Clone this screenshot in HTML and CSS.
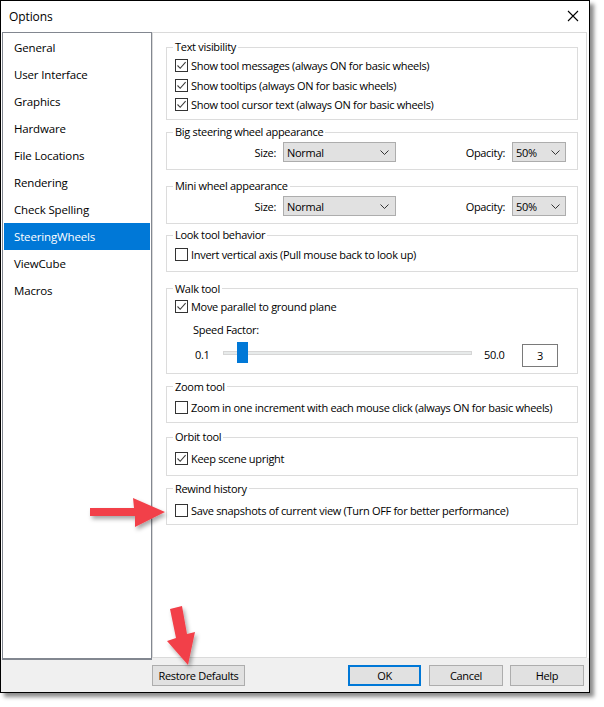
FILE: index.html
```html
<!DOCTYPE html>
<html>
<head>
<meta charset="utf-8">
<link rel="stylesheet" href="styles.css">
</head>
<body>
<div class="window">
  <div class="titlebar">
    <span class="title">Options</span>
    <svg class="close" width="12" height="12" viewBox="0 0 12 12"><path d="M1 1 L11 11 M11 1 L1 11" stroke="#000" stroke-width="1.1" fill="none"/></svg>
  </div>
  <div class="main">
    <ul class="list">
      <li>General</li>
      <li>User Interface</li>
      <li>Graphics</li>
      <li>Hardware</li>
      <li>File Locations</li>
      <li>Rendering</li>
      <li>Check Spelling</li>
      <li class="selected">SteeringWheels</li>
      <li>ViewCube</li>
      <li>Macros</li>
    </ul>
    <div class="panel">
      <fieldset class="group">
        <legend>Text visibility</legend>
        <div class="body b-tv">
          <div class="row"><span class="cb on"><svg viewBox="0 0 11 11"><path d="M1.5 5.5 L4.2 8.3 L9.6 2.2"/></svg></span><span>Show tool messages (always ON for basic wheels)</span></div>
          <div class="row"><span class="cb on"><svg viewBox="0 0 11 11"><path d="M1.5 5.5 L4.2 8.3 L9.6 2.2"/></svg></span><span>Show tooltips (always ON for basic wheels)</span></div>
          <div class="row"><span class="cb on"><svg viewBox="0 0 11 11"><path d="M1.5 5.5 L4.2 8.3 L9.6 2.2"/></svg></span><span>Show tool cursor text (always ON for basic wheels)</span></div>
        </div>
      </fieldset>
      <fieldset class="group mt4">
        <legend>Big steering wheel appearance</legend>
        <div class="body b-sel">
          <div class="selrow">
            <span class="lbl">Size:</span>
            <div class="select wide"><span class="val">Normal</span><svg width="9" height="5" viewBox="0 0 9 5"><path d="M0.5 0.5 L4.5 4.5 L8.5 0.5"/></svg></div>
            <span class="lbl">Opacity:</span>
            <div class="select narrow"><span class="val">50%</span><svg width="9" height="5" viewBox="0 0 9 5"><path d="M0.5 0.5 L4.5 4.5 L8.5 0.5"/></svg></div>
          </div>
        </div>
      </fieldset>
      <fieldset class="group mt8">
        <legend>Mini wheel appearance</legend>
        <div class="body b-sel">
          <div class="selrow">
            <span class="lbl">Size:</span>
            <div class="select wide"><span class="val">Normal</span><svg width="9" height="5" viewBox="0 0 9 5"><path d="M0.5 0.5 L4.5 4.5 L8.5 0.5"/></svg></div>
            <span class="lbl">Opacity:</span>
            <div class="select narrow"><span class="val">50%</span><svg width="9" height="5" viewBox="0 0 9 5"><path d="M0.5 0.5 L4.5 4.5 L8.5 0.5"/></svg></div>
          </div>
        </div>
      </fieldset>
      <fieldset class="group mt3">
        <legend>Look tool behavior</legend>
        <div class="body b-look">
          <div class="row"><span class="cb"></span><span>Invert vertical axis (Pull mouse back to look up)</span></div>
        </div>
      </fieldset>
      <fieldset class="group mt9">
        <legend>Walk tool</legend>
        <div class="body b-walk">
          <div class="row"><span class="cb on"><svg viewBox="0 0 11 11"><path d="M1.5 5.5 L4.2 8.3 L9.6 2.2"/></svg></span><span>Move parallel to ground plane</span></div>
          <div class="speed">Speed Factor:</div>
          <div class="sliderrow">
            <span class="min">0.1</span>
            <div class="slider"><div class="track"></div><div class="thumb"></div></div>
            <span class="max">50.0</span>
            <div class="textbox">3</div>
          </div>
        </div>
      </fieldset>
      <fieldset class="group mt5">
        <legend>Zoom tool</legend>
        <div class="body b-zoom">
          <div class="row"><span class="cb"></span><span>Zoom in one increment with each mouse click (always ON for basic wheels)</span></div>
        </div>
      </fieldset>
      <fieldset class="group mt6">
        <legend>Orbit tool</legend>
        <div class="body b-orbit">
          <div class="row"><span class="cb on"><svg viewBox="0 0 11 11"><path d="M1.5 5.5 L4.2 8.3 L9.6 2.2"/></svg></span><span>Keep scene upright</span></div>
        </div>
      </fieldset>
      <fieldset class="group mt5">
        <legend>Rewind history</legend>
        <div class="body b-rewind">
          <div class="row"><span class="cb"></span><span>Save snapshots of current view (Turn OFF for better performance)</span></div>
        </div>
      </fieldset>
    </div>
  </div>
  <div class="footer">
    <div class="btn restore">Restore Defaults</div>
    <div class="spacer"></div>
    <div class="btn ok">OK</div>
    <div class="btn cancel">Cancel</div>
    <div class="btn help">Help</div>
  </div>
</div>
<svg class="arrows" width="604" height="707" viewBox="0 0 604 707">
  <defs>
    <filter id="sh" x="-20%" y="-20%" width="150%" height="150%">
      <feDropShadow dx="2" dy="3" stdDeviation="2" flood-color="#000" flood-opacity="0.35"/>
    </filter>
  </defs>
  <polygon filter="url(#sh)" fill="#f2414a" points="90,508 134,508 133,498 165,512 135,527 135,516 90,516"/>
  <polygon filter="url(#sh)" fill="#f2414a" points="170,609 182,606 187,634 195,632 188,665 167,641 176,638"/>
</svg>
</body>
</html>
```
FILE: styles.css
```css
html, body {
  margin: 0;
  padding: 0;
  background: #ffffff;
}
body {
  font-family: "Open Sans", "Noto Sans", sans-serif;
  font-size: 11px;
  letter-spacing: -0.3px;
  color: #000;
  position: relative;
  width: 604px;
  height: 707px;
  overflow: hidden;
}
.window {
  width: 588px;
  height: 691px;
  border: 1px solid #000;
  background: #f0f0f0;
  box-shadow: 4px 4px 4px rgba(0,0,0,0.45);
  display: flex;
  flex-direction: column;
}
.titlebar {
  height: 31px;
  background: #fff;
  display: flex;
  align-items: center;
  justify-content: space-between;
  padding: 0 10px 1px 8px;
  box-sizing: border-box;
}
.title {
  font-size: 12px;
  letter-spacing: -0.1px;
}
.close {
  margin-top: -1px;
}
.main {
  height: 626px;
  display: flex;
  background: #fff;
}
.list {
  list-style: none;
  margin: 0 0 0 1px;
  padding: 1px;
  width: 146px;
  height: 623px;
  border: 1px solid #828790;
  border-bottom-width: 2px;
}
.list li {
  height: 27px;
  line-height: 27px;
  padding-left: 10px;
  font-size: 11.5px;
  letter-spacing: -0.15px;
}
.list li.selected {
  background: #0078d7;
  color: #fff;
}
.panel {
  margin-right: 2px;
  border: 1px solid #dadada;
  padding-top: 6px;
  display: flex;
  flex-direction: column;
  box-sizing: border-box;
  width: 435px;
  height: 626px;
}
.group {
  border: 1px solid #dcdcdc;
  margin: 0 0 0 13px;
  padding: 0;
  width: 412px;
  box-sizing: border-box;
  min-width: 0;
}
.group legend {
  padding: 0 2px;
  margin-left: 6px;
  line-height: 16px;
  height: 16px;
}
.mt3 { margin-top: 3px; }
.mt4 { margin-top: 4px; }
.mt5 { margin-top: 5px; }
.mt6 { margin-top: 6px; }
.mt8 { margin-top: 8px; }
.mt9 { margin-top: 9px; }
.body {
  padding-left: 8px;
}
.b-tv { padding-top: 1px; padding-bottom: 4.5px; }
.b-sel { padding-top: 2px; padding-bottom: 7px; }
.b-look { padding-top: 2px; padding-bottom: 6px; }
.b-walk { padding-top: 0; padding-bottom: 6px; }
.b-zoom { padding-top: 3px; padding-bottom: 5px; }
.b-orbit { padding-top: 4px; padding-bottom: 6px; }
.b-rewind { padding-top: 4px; padding-bottom: 4px; }
.row {
  height: 19.5px;
  display: flex;
  align-items: center;
}
.cb {
  width: 11px;
  height: 11px;
  border: 1px solid #333;
  background: #fff;
  margin-right: 3px;
  flex: none;
  display: flex;
}
.cb svg {
  width: 11px;
  height: 11px;
}
.cb svg path {
  fill: none;
  stroke: #3c3c3c;
  stroke-width: 1.1;
}
.selrow {
  display: flex;
  align-items: center;
  height: 20px;
  margin-left: -8px;
}
.lbl {
  width: 109px;
  text-align: right;
  margin-right: 7px;
  box-sizing: border-box;
}
.select {
  height: 20px;
  box-sizing: border-box;
  border: 1px solid #adadad;
  background: #e1e1e1;
  display: flex;
  align-items: center;
  padding: 0 6px 0 3px;
}
.select .val {
  flex: 1;
}
.select svg path {
  fill: none;
  stroke: #333;
  stroke-width: 1;
}
.select.wide { width: 113px; }
.select.narrow { width: 54px; padding-right: 5px; }
.speed {
  height: 20px;
  line-height: 20px;
  margin-top: 3.5px;
  padding-left: 18px;
}
.sliderrow {
  margin-top: 2px;
  height: 25px;
  display: flex;
  align-items: center;
  margin-left: -8px;
}
.min {
  width: 28px;
  padding-left: 28px;
}
.slider {
  width: 249px;
  height: 21px;
  position: relative;
  align-self: flex-start;
}
.track {
  position: absolute;
  left: 0;
  right: 0;
  top: 9px;
  height: 2px;
  background: #e7eaea;
  border: 1px solid #d6d6d6;
}
.thumb {
  position: absolute;
  left: 14px;
  top: 0;
  width: 11px;
  height: 21px;
  background: #0078d7;
}
.max {
  width: 38px;
  padding-left: 12px;
  box-sizing: content-box;
}
.textbox {
  width: 36px;
  height: 23px;
  box-sizing: border-box;
  border: 1px solid #7a7a7a;
  background: #fff;
  text-align: center;
  line-height: 21px;
  align-self: flex-end;
}
.footer {
  height: 34px;
  box-sizing: border-box;
  padding: 7px 5px 0 151px;
  display: flex;
  align-items: flex-start;
}
.spacer {
  flex: 1;
}
.btn {
  height: 21px;
  box-sizing: border-box;
  border: 1px solid #adadad;
  background: #e1e1e1;
  text-align: center;
  line-height: 19px;
}
.restore { width: 93px; }
.ok {
  width: 73px;
  border: 2px solid #0078d7;
  line-height: 17px;
}
.cancel { width: 74px; margin-left: 8px; }
.help { width: 74px; margin-left: 7px; }
.arrows {
  position: absolute;
  left: 0;
  top: 0;
  pointer-events: none;
}
```
